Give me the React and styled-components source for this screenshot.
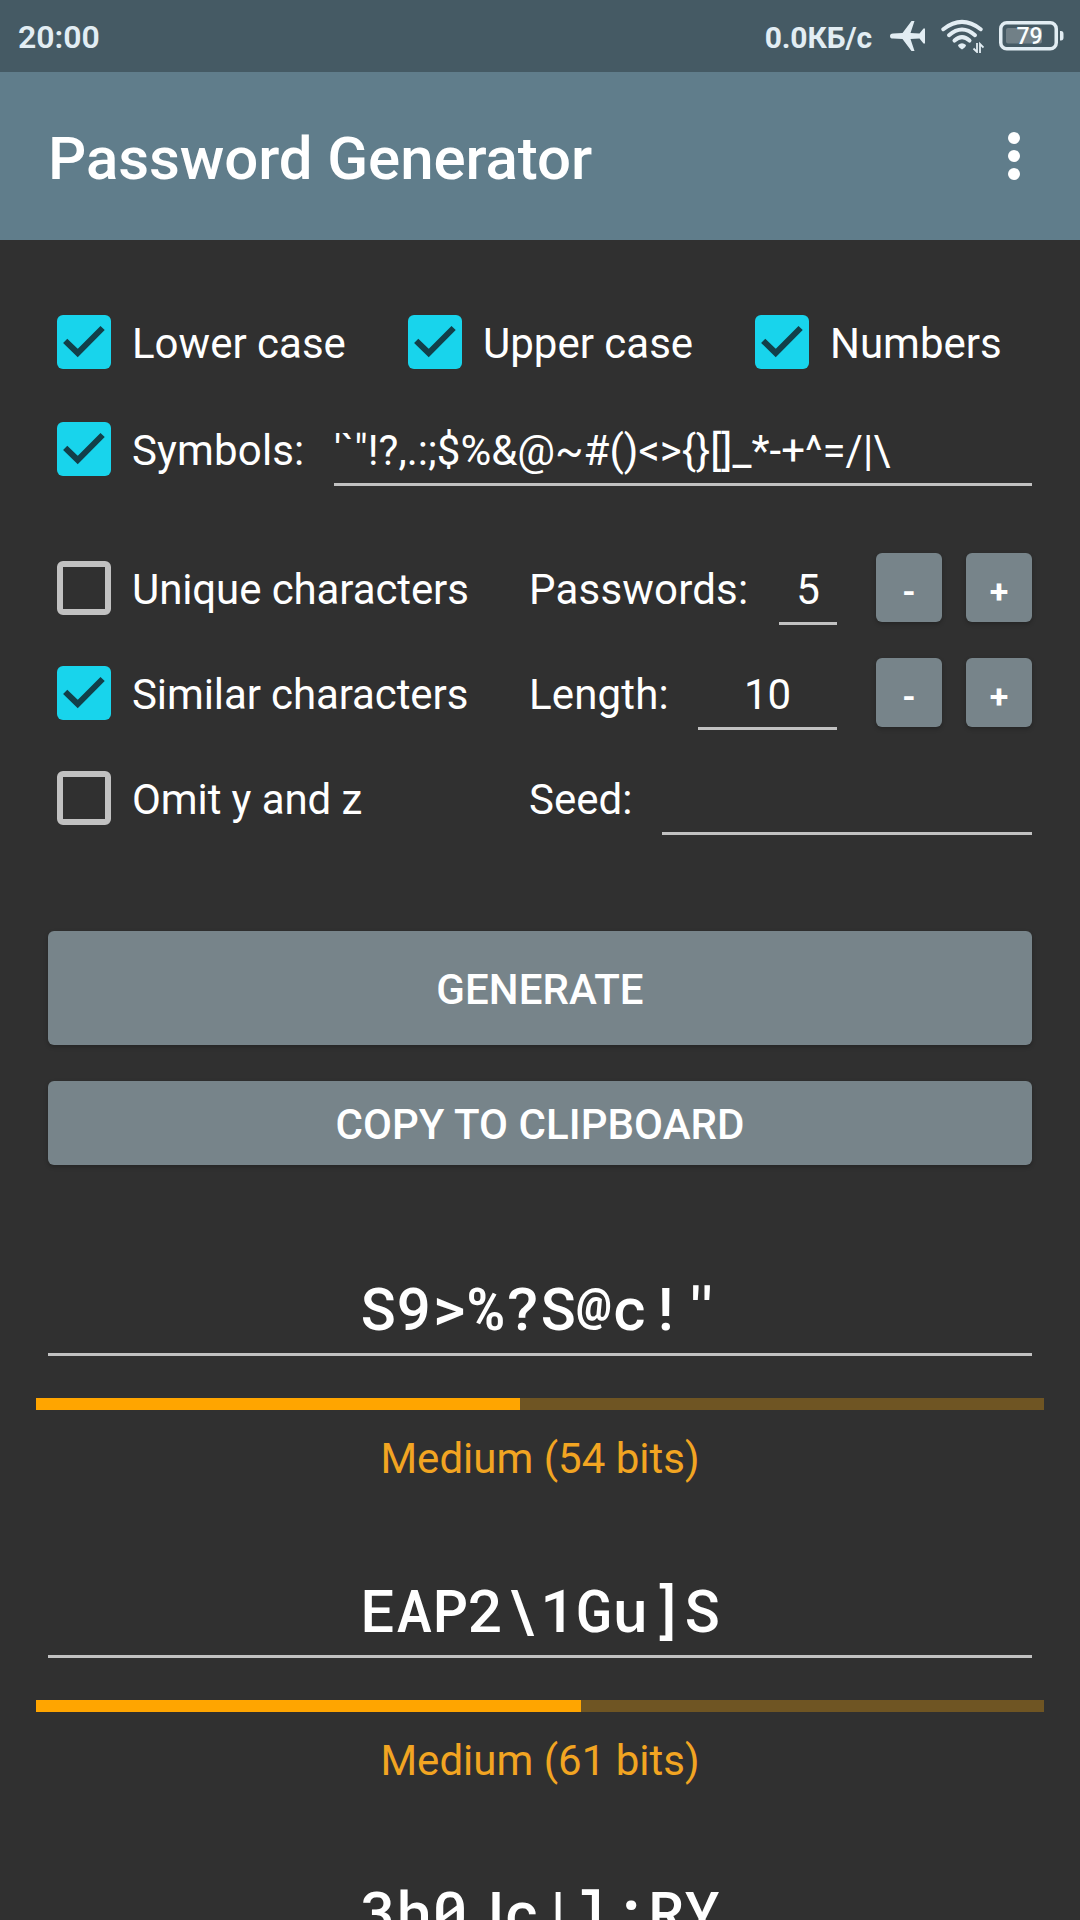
import React from 'react'
import styled, { createGlobalStyle } from 'styled-components'

const GlobalStyle=createGlobalStyle`
  *{
    box-sizing:border-box;
  }
  body{
    margin:0;
    background:#303030;
    color:#fff;
    font-family:Roboto, sans-serif;
    overflow:hidden;
  }
`;
const Container=styled.div`
  width:1080px;
  height:1920px;
  overflow:hidden;
  background:#303030;
`;
const StatusBar=styled.div`
  height:72px;
  padding:0 16px 0 18px;
  display:flex;
  align-items:center;
  justify-content:space-between;
  background:#455a64;
  color:#e2edf3;
`;
const Clock=styled.span`
  font-size:32px;
  font-weight:600;
  padding-top:2px;
`;
const StatusIcons=styled.div`
  display:flex;
  align-items:center;
`;
const Speed=styled.span`
  font-size:30px;
  font-weight:700;
  letter-spacing:-0.1px;
  padding-top:2px;
  margin-right:18px;
`;
const StatusSvg=styled.svg`
  display:block;
  margin-right:${props => props.$gap || 0}px;
`;
const AppBar=styled.header`
  height:168px;
  padding:0 60px 0 48px;
  display:flex;
  align-items:center;
  justify-content:space-between;
  background:#607d8b;
`;
const Title=styled.h1`
  margin:0;
  padding-top:4px;
  font-size:60px;
  font-weight:500;
  letter-spacing:-0.08px;
`;
const MenuButton=styled.div`
  display:flex;
  flex-direction:column;
  gap:6px;
`;
const Dot=styled.span`
  width:12px;
  height:12px;
  border-radius:50%;
  background:#fff;
`;
const Form=styled.div`
  padding:75px 48px 0;
`;
const Row=styled.div`
  display:flex;
  height:54px;
  align-items:center;
  margin-bottom:${props => props.$space || 0}px;
`;
const CheckLabel=styled.div`
  display:flex;
  align-items:center;
  padding-left:9px;
  width:${props => props.$width}px;
  flex-shrink:0;
`;
const CheckBox=styled.span`
  width:54px;
  height:54px;
  flex-shrink:0;
  border-radius:6px;
  margin-right:21px;
  background:${props => props.$checked ? '#18d4ec' : 'transparent'};
  border:${props => props.$checked ? 'none' : '6px solid #c1c1c1'};
`;
const Label=styled.span`
  font-size:42px;
  line-height:50px;
  padding-top:3px;
  white-space:nowrap;
  letter-spacing:${props => props.$spacing || 0}px;
  width:${props => props.$width ? props.$width + 'px' : 'auto'};
  flex-shrink:0;
`;
const Field=styled.div`
  flex:${props => props.$width ? 'none' : '1'};
  width:${props => props.$width ? props.$width + 'px' : 'auto'};
  height:64px;
  margin-top:10px;
  border-bottom:3px solid #c1c1c1;
  font-size:42px;
  line-height:56px;
  padding-top:1px;
  text-align:${props => props.$left ? 'left' : 'center'};
  white-space:nowrap;
`;
const Stepper=styled.div`
  width:66px;
  height:69px;
  margin-left:${props => props.$first ? 39 : 24}px;
  margin-bottom:1px;
  border-radius:6px;
  background:#77848a;
  box-shadow:0 2px 4px rgba(0,0,0,0.25);
  font-size:34px;
  font-weight:700;
  line-height:76px;
  text-align:center;
`;
const Button=styled.div`
  height:${props => props.$height}px;
  margin-bottom:36px;
  padding-top:3px;
  display:flex;
  align-items:center;
  justify-content:center;
  border-radius:6px;
  background:#77848a;
  box-shadow:0 2px 4px rgba(0,0,0,0.25);
  font-size:42px;
  font-weight:500;
  letter-spacing:0.05px;
`;
const Results=styled.div`
  padding:54px 36px 0;
`;
const Result=styled.div`
  height:302px;
`;
const Password=styled.div`
  height:101px;
  margin:0 12px;
  border-bottom:3px solid #c1c1c1;
  font-family:"Roboto Mono", Roboto, monospace;
  font-size:60px;
  font-weight:500;
  line-height:103px;
  text-align:center;
  white-space:pre;
`;
const Bar=styled.div`
  height:12px;
  margin-top:42px;
  background:#6f5523;
`;
const BarFill=styled.div`
  height:12px;
  background:#ffa500;
`;
const Strength=styled.div`
  margin-top:24px;
  font-size:42px;
  line-height:50px;
  text-align:center;
  color:#f2a522;
`;

const Check = ({ checked, width, spacing, children }) => (
  <CheckLabel $width={width}>
    <CheckBox $checked={checked}>
      {checked && (
        <svg width="54" height="54" viewBox="0 0 54 54" fill="none">
          <path d="M8.2 25.8 L20.7 38 L45.6 13" stroke="#123f49" strokeWidth="6" />
        </svg>
      )}
    </CheckBox>
    <Label $spacing={spacing}>{children}</Label>
  </CheckLabel>
)

const Steppers = () => (
  <>
    <Stepper $first>-</Stepper>
    <Stepper>+</Stepper>
  </>
)

const results = [
  { password: 'S9>%?S@c!"', bits: 54, percent: 48 },
  { password: 'EAP2\\1Gu]S', bits: 61, percent: 54.1 },
  { password: '3h0Jc|l:RY', bits: 61, percent: 54.1 },
]

const App = () => {
  return (
    <Container>
      <GlobalStyle />
      <StatusBar>
        <Clock>20:00</Clock>
        <StatusIcons>
          <Speed>0.0КБ/с</Speed>
          <StatusSvg $gap={15} width="36" height="30" viewBox="0 0 36 30" fill="currentColor">
            <path d="M0 15 Q0 12.4 3 12.4 L12.5 12 L21.5 0 H24.5 L20.5 12 L29.5 12.6 L33.5 7.5 H35 V22.5 H33.5 L29.5 17.4 L20.5 18 L24.5 30 H21.5 L12.5 18 L3 17.6 Q0 17.6 0 15Z" />
          </StatusSvg>
          <StatusSvg $gap={14.5} width="43" height="34" viewBox="0 0 43 34">
            <g fill="none" stroke="currentColor" strokeWidth="4" strokeLinecap="round">
              <path d="M2.3 10.2 Q21 -4.5 39.7 10.2" />
              <path d="M8 16.2 Q21 4.8 34 16.2" />
              <path d="M13.5 21.6 Q21 14.8 28.5 21.6" />
            </g>
            <path d="M17 26 Q21 22.5 25 26 Q25 28 21 30.5 Q17 28 17 26Z" fill="currentColor" />
            <path d="M36 24 V33 L32.5 29.5 M39 34 V25 L42.5 28.5" fill="none" stroke="currentColor" strokeWidth="1.8" />
          </StatusSvg>
          <StatusSvg width="65.5" height="30" viewBox="0 0 65.5 30">
            <rect x="1.75" y="1.75" width="55.5" height="26" rx="6" fill="none" stroke="currentColor" strokeWidth="3.5" />
            <rect x="7" y="7" width="36" height="15.5" rx="2" fill="#718087" />
            <path d="M61 10 H62 Q64.5 10 64.5 13 V16.5 Q64.5 19.5 62 19.5 H61Z" fill="currentColor" />
            <text x="30.5" y="23" fontSize="23" fontWeight="500" textAnchor="middle" fill="#fafeff">79</text>
          </StatusSvg>
        </StatusIcons>
      </StatusBar>
      <AppBar>
        <Title>Password Generator</Title>
        <MenuButton>
          <Dot />
          <Dot />
          <Dot />
        </MenuButton>
      </AppBar>
      <Form>
        <Row $space={53}>
          <Check checked width={351}>Lower case</Check>
          <Check checked width={347}>Upper case</Check>
          <Check checked width={286}>Numbers</Check>
        </Row>
        <Row $space={85}>
          <Check checked width={286} spacing={0.15}>Symbols:</Check>
          <Field $left>{"'`\"!?,.:;$%&@~#()<>{}[]_*-+^=/|\\"}</Field>
        </Row>
        <Row $space={51}>
          <Check width={481} spacing={-0.1}>Unique characters</Check>
          <Label $width={250} $spacing={0.2}>Passwords:</Label>
          <Field $width={58}>5</Field>
          <Steppers />
        </Row>
        <Row $space={51}>
          <Check checked width={481} spacing={-0.1}>Similar characters</Check>
          <Label $width={169} $spacing={0.15}>Length:</Label>
          <Field $width={139}>10</Field>
          <Steppers />
        </Row>
        <Row $space={106}>
          <Check width={481} spacing={-0.1}>Omit y and z</Check>
          <Label $width={133}>Seed:</Label>
          <Field />
        </Row>
        <Button $height={114}>GENERATE</Button>
        <Button $height={84}>COPY TO CLIPBOARD</Button>
      </Form>
      <Results>
        {results.map(item => (
          <Result key={item.password}>
            <Password>{item.password}</Password>
            <Bar>
              <BarFill style={{ width: item.percent + '%' }} />
            </Bar>
            <Strength>Medium ({item.bits} bits)</Strength>
          </Result>
        ))}
      </Results>
    </Container>
  )
}

export default App
